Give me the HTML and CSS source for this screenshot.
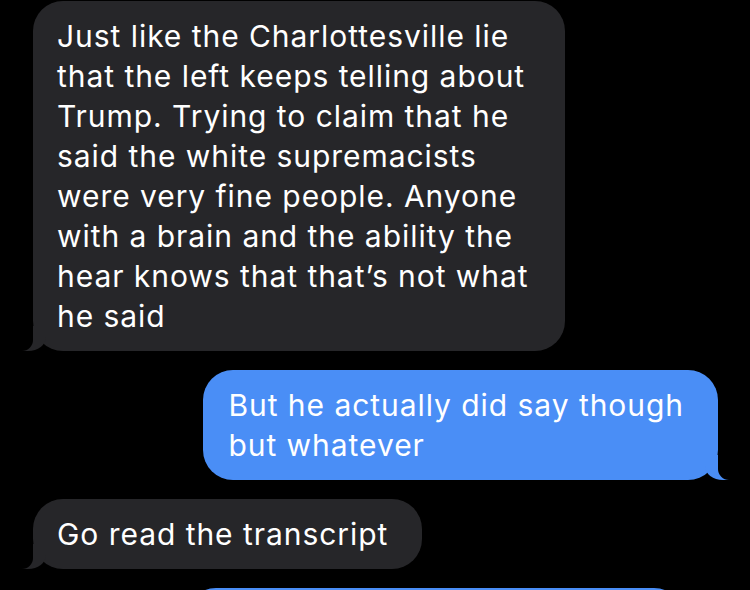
FILE: index.html
```html
<!DOCTYPE html>
<html>
	<head>
		<title>Messages</title>
		<meta charset="UTF-8"/>
		<link rel="stylesheet" href="styles.css">
	</head>
	<body>
		<div class="thread">

		  <p class="bubble them long">Just like the Charlottesville lie<br>that the left keeps telling about<br>Trump. Trying to claim that he<br>said the white supremacists<br>were very fine people. Anyone<br>with a brain and the ability the<br>hear knows that that’s not what<br>he said</p>

		  <p class="bubble me">But he actually did say though<br>but whatever</p>

		  <p class="bubble them">Go read the transcript</p>

		  <p class="bubble me next">&nbsp;</p>

		</div>
	</body>
</html>
```

FILE: styles.css
```css
* {
  box-sizing: border-box;
}

body {
  margin: 0;
  background: #000;
  font-family: "Inter", "Roboto", sans-serif;
  overflow: hidden;
}

.thread {
  display: flex;
  flex-direction: column;
  gap: 19px;
  padding: 1px 32px 0 33px;
}

.bubble {
  position: relative;
  margin: 0;
  padding: 15px 34px 15px 24px;
  border-radius: 30px;
  color: #fff;
  font-size: 30px;
  line-height: 40px;
  letter-spacing: 0.95px;
  max-width: 540px;
}

.bubble::before,
.bubble::after {
  content: "";
  position: absolute;
  bottom: 0;
  height: 25px;
}

/* grey, left side */
.them {
  align-self: flex-start;
  background: #262629;
}

.long {
  width: 532px;
}

.them::before {
  left: -11px;
  width: 24px;
  background: #262629;
  border-bottom-right-radius: 18px 14px;
}

.them::after {
  left: -26px;
  width: 26px;
  background: #000;
  border-bottom-right-radius: 11px;
}

/* blue, right side */
.me {
  align-self: flex-end;
  background: #4a8ef6;
  padding-left: 25px;
}

.me::before {
  right: -11px;
  width: 24px;
  background: #4a8ef6;
  border-bottom-left-radius: 18px 14px;
}

.me::after {
  right: -26px;
  width: 26px;
  background: #000;
  border-bottom-left-radius: 11px;
}

.next {
  width: 498px;
  margin-right: 34px;
  height: 70px;
}

.next::before,
.next::after {
  display: none;
}
```
